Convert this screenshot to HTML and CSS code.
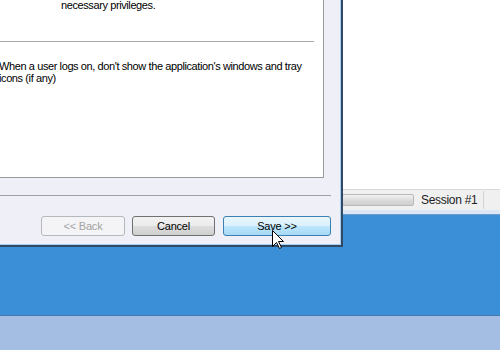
FILE: index.html
```html
<!DOCTYPE html>
<html>
<head>
<meta charset="utf-8">
<link rel="stylesheet" href="styles.css">
</head>
<body>
<div class="screen">
  <div class="app">
    <div class="app-body"></div>
    <div class="statusbar">
      <div class="progress"></div>
      <div class="session">Session #1</div>
      <div class="sb-sep"></div>
    </div>
    <div class="frame-bottom"></div>
  </div>
  <div class="desktop"></div>
  <div class="taskbar"></div>

  <div class="dialog">
    <div class="dialog-inner">
      <div class="panel">
        <div class="priv">necessary privileges.</div>
        <div class="panel-sep"></div>
        <div class="opt">When a user logs on, don't show the application's windows and tray icons (if any)</div>
      </div>
      <div class="sep"></div>
      <div class="buttons">
        <div class="btn btn-disabled btn-back">&lt;&lt; Back</div>
        <div class="btn btn-cancel">Cancel</div>
        <div class="btn btn-save">Save &gt;&gt;</div>
      </div>
    </div>
  </div>

  <svg class="cursor" width="14" height="20" viewBox="0 0 14 20">
    <path d="M0.5 0.5 L0.5 16.5 L4.5 12.5 L7.5 18.5 L9.5 17.5 L6.5 11.5 L11.5 11.5 Z" fill="#fff" stroke="#000" stroke-width="1" stroke-linejoin="miter"/>
  </svg>
</div>
</body>
</html>
```
FILE: styles.css
```css
html, body {
  margin: 0;
  padding: 0;
}
body {
  width: 500px;
  height: 350px;
  overflow: hidden;
  font-family: "Liberation Sans", Arial, sans-serif;
  font-size: 11px;
  letter-spacing: -0.4px;
  color: #000;
}
.screen {
  position: relative;
  width: 500px;
  height: 350px;
  display: flex;
  flex-direction: column;
  overflow: hidden;
}
.app {
  height: 215px;
  display: flex;
  flex-direction: column;
  background: #fff;
}
.app-body {
  flex: 1;
  background: #fff;
}
.statusbar {
  height: 20px;
  border-top: 1px solid #d9d9d9;
  background: #f0f0f0;
  display: flex;
  align-items: center;
}
.progress {
  margin-left: 342px;
  width: 70px;
  height: 10px;
  border: 1px solid #b8b8b8;
  border-radius: 2px;
  background: linear-gradient(#f2f2f2, #d8d8d8 60%, #cfcfcf);
}
.session {
  margin-left: 7px;
  font-family: "Liberation Sans", Arial, sans-serif;
  font-size: 12px;
  letter-spacing: -0.3px;
  color: #222;
  width: 62px;
}
.sb-sep {
  width: 1px;
  height: 18px;
  background: #d2d2d2;
}
.frame-bottom {
  height: 4px;
  background: #dbe7f5;
  border-bottom: 1px solid #6d9bcb;
}
.desktop {
  height: 100px;
  background: #3b8fd7;
}
.taskbar {
  flex: 1;
  background: #a3bde3;
  border-top: 1px solid #4a78ad;
}

.dialog {
  position: absolute;
  left: -4px;
  top: -4px;
  width: 347px;
  height: 251px;
  border-right: 2px solid #2f4a66;
  border-bottom: 2px solid #2f4a66;
  box-sizing: border-box;
  background: #a9cdee;
}
.dialog-inner {
  width: 344px;
  height: 248px;
  background: #efeff8;
  display: flex;
  flex-direction: column;
}
.panel {
  margin-left: 3px;
  width: 325px;
  height: 182px;
  box-sizing: border-box;
  background: #fff;
  border-right: 1px solid #9a9a9a;
  border-bottom: 1px solid #9a9a9a;
  display: flex;
  flex-direction: column;
}
.priv {
  margin-left: 62px;
  margin-top: 3px;
  line-height: 13px;
}
.panel-sep {
  margin-top: 29px;
  width: 315px;
  height: 1px;
  background: #a8a8a8;
}
.opt {
  margin-top: 18px;
  margin-left: 0;
  width: 312px;
  line-height: 12px;
}
.sep {
  margin-top: 17px;
  margin-left: 4px;
  width: 331px;
  height: 1px;
  background: #a0a0a0;
}
.buttons {
  margin-top: 20px;
  padding-left: 45px;
  display: flex;
}
.btn {
  height: 20px;
  box-sizing: border-box;
  border-radius: 3px;
  display: flex;
  align-items: center;
  justify-content: center;
  font-size: 11px;
  letter-spacing: -0.2px;
}
.btn-back {
  width: 84px;
  border: 1px solid #b5b9bd;
  background: #f4f4f6;
  color: #a3a3a3;
}
.btn-cancel {
  margin-left: 7px;
  width: 83px;
  border: 1px solid #707070;
  background: linear-gradient(#f2f2f2, #ebebeb 50%, #dddddd 51%, #cfcfcf);
}
.btn-save {
  margin-left: 8px;
  width: 108px;
  border: 1px solid #3c7fb1;
  background: linear-gradient(#eaf6fd, #d9f0fc 50%, #bee6fd 51%, #a7d9f5);
}
.cursor {
  position: absolute;
  left: 272px;
  top: 230px;
}
```
